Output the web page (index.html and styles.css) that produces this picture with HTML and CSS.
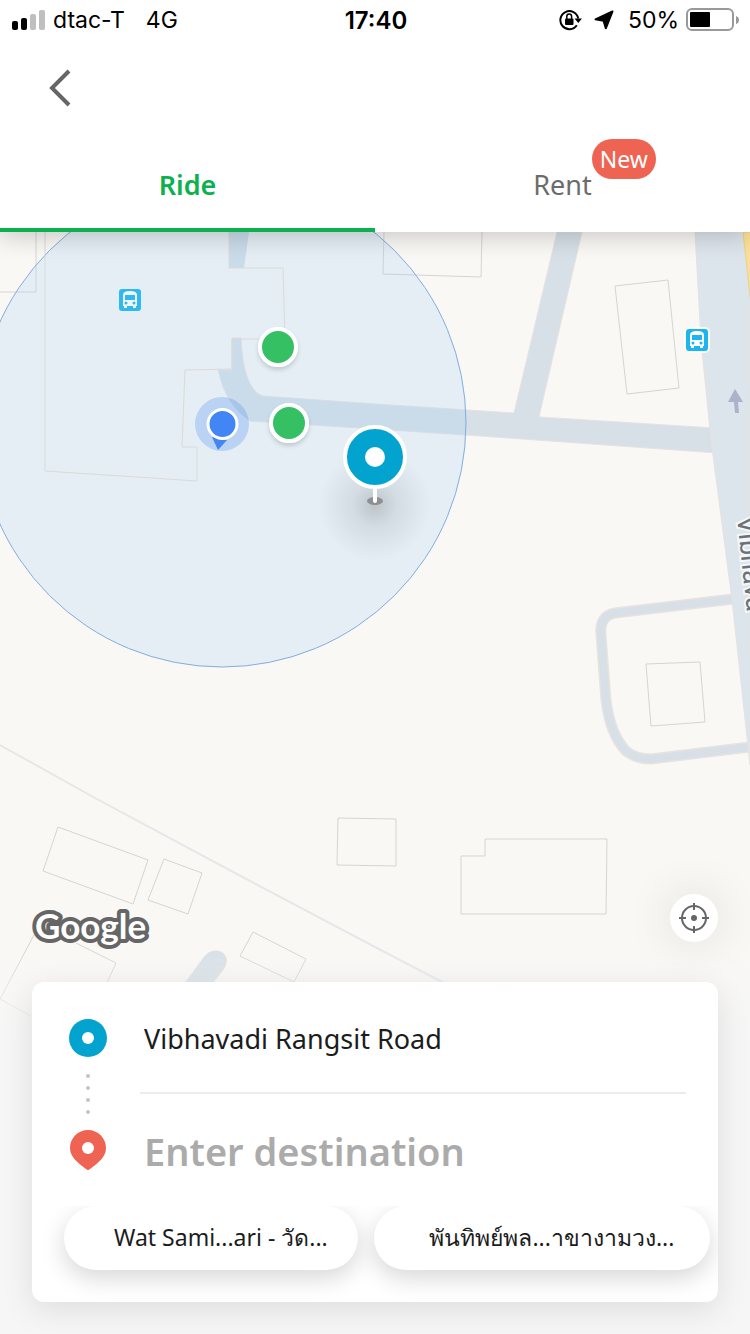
FILE: index.html
```html
<!DOCTYPE html>
<html lang="en">
<head>
  <meta charset="UTF-8">
  <meta name="viewport" content="width=device-width, initial-scale=1">
  <title>Ride</title>
  <link rel="stylesheet" href="styles.css">
</head>
<body>
  <div class="app">
    <header class="header">
      <div class="status">
        <div class="status-left">
          <svg class="signal" width="34" height="20" viewBox="0 0 34 20">
            <rect x="0" y="11" width="6" height="9" rx="2"/>
            <rect x="9" y="8" width="6" height="12" rx="2"/>
            <rect x="18" y="4" width="6" height="16" rx="2" fill="#bfbfbf"/>
            <rect x="27" y="0" width="6" height="20" rx="2" fill="#bfbfbf"/>
          </svg>
          <span>dtac-T</span>
          <span class="network">4G</span>
        </div>
        <div class="clock">17:40</div>
        <div class="status-right">
          <svg width="24" height="22" viewBox="0 0 24 22">
            <path d="M17.800 16.200A9 9 0 1 1 19.200 9.500" fill="none" stroke="#000" stroke-width="2"/>
            <path d="M15.500 9.500h7.500l-3.700 4.500z"/>
            <rect x="6" y="9.500" width="8.500" height="6.500" rx="1"/>
            <path d="M7.800 10V7.500a2.400 2.400 0 0 1 4.800 0V10" fill="none" stroke="#000" stroke-width="1.500"/>
          </svg>
          <svg class="arrow" width="20" height="20" viewBox="0 0 20 20">
            <path d="M18.500 1.500L1.500 9.300L9.500 10.800L11.800 18.300Z" stroke="#000" stroke-width="2" stroke-linejoin="round"/>
          </svg>
          <span>50%</span>
          <svg width="54" height="24" viewBox="0 0 54 24">
            <rect x="1" y="1" width="46" height="21" rx="5" fill="none" stroke="#999" stroke-width="2"/>
            <rect x="4" y="4" width="20" height="15" rx="1"/>
            <path d="M50 8q3 1 3 4t-3 4z" fill="#999"/>
          </svg>
        </div>
      </div>
      <div class="toolbar">
        <button class="back" type="button" aria-label="Back">
          <svg width="24" height="40" viewBox="0 0 24 40">
            <path d="M21 3L4 20l17 17" fill="none" stroke="#666" stroke-width="4"/>
          </svg>
        </button>
      </div>
      <div class="tabs" role="tablist">
        <button class="tab tab-active" type="button" role="tab" aria-selected="true">Ride</button>
        <button class="tab" type="button" role="tab" aria-selected="false">
          <span class="tab-label">Rent<span class="badge">New</span></span>
        </button>
      </div>
    </header>

    <main class="main">
      <svg class="map" viewBox="0 232 750 1102" preserveAspectRatio="xMidYMin slice" aria-hidden="true">
        <defs>
          <radialGradient id="pinShade">
            <stop offset="0" stop-color="#555" stop-opacity=".28"/>
            <stop offset=".4" stop-color="#667" stop-opacity=".13"/>
            <stop offset="1" stop-color="#667" stop-opacity="0"/>
          </radialGradient>
          <linearGradient id="fade" x1="0" y1="0" x2="0" y2="1">
            <stop offset="0" stop-color="#f6f6f6" stop-opacity="0"/>
            <stop offset="1" stop-color="#f6f6f6"/>
          </linearGradient>
          <filter id="drop" x="-30%" y="-30%" width="160%" height="170%">
            <feDropShadow dx="0" dy="3" stdDeviation="2" flood-opacity=".15"/>
          </filter>
          <g id="bus">
            <rect x="-13" y="-13" width="26" height="26" rx="5" fill="#fff" opacity=".8"/>
            <rect x="-11" y="-11" width="22" height="22" rx="3" fill="#1cb5f0"/>
            <path d="M-7-5q0-4 7-4t7 4V6H6v2H3V6h-6v2h-3V6h-1z" fill="#fff"/>
            <rect x="-5" y="-5" width="10" height="5" fill="#1cb5f0"/>
            <circle cx="-4" cy="3" r="1.500" fill="#1cb5f0"/>
            <circle cx="4" cy="3" r="1.500" fill="#1cb5f0"/>
          </g>
          <g id="busDim">
            <rect x="-11" y="-11" width="22" height="22" rx="3" fill="#2fb9ef"/>
            <path d="M-7-5q0-4 7-4t7 4V6H6v2H3V6h-6v2h-3V6h-1z" fill="#eef6fb"/>
            <rect x="-5" y="-5" width="10" height="5" fill="#2fb9ef"/>
            <circle cx="-4" cy="3" r="1.500" fill="#2fb9ef"/>
            <circle cx="4" cy="3" r="1.500" fill="#2fb9ef"/>
          </g>
        </defs>

        <rect y="232" width="750" height="1102" fill="#f9f8f5"/>

        <!-- roads -->
        <g fill="#d6e0e6" stroke="#e6e2e3" stroke-width="1">
          <path d="M229 232h20l-5 36h-15z" stroke="none"/>
          <path d="M733 599L615 613Q599 616 601 635L606 700Q610 734 626 751Q636 759 651 759L750 747" fill="none" stroke="#e8e2e1" stroke-width="11"/>
          <path d="M733 599L615 613Q599 616 601 635L606 700Q610 734 626 751Q636 759 651 759L750 747" fill="none" stroke="#d6e0e6" stroke-width="8"/>
          <path d="M232 338h9Q243 388 262 396L375 404L514 413L557 232h25L539 417L714 428L717 453L466 435L375 429L250 421Q226 406 218 370h14z"/>
          <path d="M180 990L204 957Q213 947 223 953Q230 960 223 970L207 990z"/>
        </g>
        <path d="M0 745L95 798L235 873L375 947L444 983" fill="none" stroke="#e7e6e9" stroke-width="2"/>
        <path d="M695 232L701 340L711 440L732 600L750 765V232z" fill="#dde5ec" stroke="#e6e1e3"/>
        <path d="M743 232L751 305V232z" fill="#fadf98" stroke="#efd083"/>
        <path d="M735 389l8 13h-5l1 11h-4l-1-11h-6z" fill="#adb1c9"/>

        <!-- buildings -->
        <g fill="none" stroke="#d6d5d2">
          <path d="M36 232v60H0"/>
          <path d="M384 232l-1 42 98 3 1-45"/>
          <path d="M615 286l53-6 11 108-52 6z"/>
          <path d="M646 664l54-2 5 60-54 4z"/>
          <path d="M58 827l90 33-15 44-90-33z"/>
          <path d="M164 859l38 14-14 41-40-14z"/>
          <path d="M338 818l58 1v47l-59-1z"/>
          <path d="M485 839h122l-1 75H461v-58h24z"/>
          <path d="M253 932l53 27-12 23-54-26z"/>
          <path d="M34 935L0 999l31 17M76 943l40 20-10 22"/>
        </g>

        <circle cx="222" cy="423" r="244" fill="#a9cff5" fill-opacity=".25" stroke="#82aedf"/>
        <path d="M45 232v239l152 10v-34h-15l3-77 47-1v-30h53l-2-71h-54v-37" fill="none" stroke="#dbdad9"/>

        <use href="#busDim" x="130" y="300"/>
        <use href="#bus" x="697" y="340"/>
        <text class="road-name" transform="translate(737 517) rotate(84)">Vibhava</text>

        <!-- own position and stations nearby -->
        <circle cx="222" cy="424" r="27" fill="#4285f4" fill-opacity=".26"/>
        <path d="M212 437l6 13 9-10z" fill="#4285f4"/>
        <circle cx="222.500" cy="424" r="14.500" fill="#4285f4" stroke="#fff" stroke-width="3"/>
        <g fill="#34c063" stroke="#fff" stroke-width="4" filter="url(#drop)">
          <circle cx="278" cy="347" r="18"/>
          <circle cx="289" cy="423" r="18"/>
        </g>

        <!-- pickup pin -->
        <ellipse cx="375" cy="505" rx="56" ry="56" fill="url(#pinShade)"/>
        <ellipse cx="375" cy="501" rx="8" ry="4" fill="#8d8f91"/>
        <path d="M375 485v16" stroke="#fff" stroke-width="4" stroke-linecap="round"/>
        <circle cx="375" cy="457" r="30" fill="#02a3ce" stroke="#fff" stroke-width="4"/>
        <circle cx="375" cy="457" r="10" fill="#fff"/>

        <rect y="950" width="750" height="90" fill="url(#fade)"/>
        <rect y="1040" width="750" height="294" fill="#f6f6f6"/>
      </svg>

      <div class="map-controls">
        <svg class="google" width="118" height="44" viewBox="0 0 118 44" role="img" aria-label="Google">
          <text x="3" y="33">Google</text>
        </svg>
        <button class="locate" type="button" aria-label="My location">
          <svg width="30" height="30" viewBox="0 0 30 30" fill="none" stroke="#666" stroke-width="2">
            <circle cx="15" cy="15" r="12"/>
            <path d="M15 0v7M15 23v7M0 15h7M23 15h7"/>
            <circle cx="15" cy="15" r="3" fill="#666" stroke="none"/>
          </svg>
        </button>
      </div>

      <section class="card">
        <form class="route">
          <svg class="rail" width="48" height="224" viewBox="0 0 48 224" aria-hidden="true">
            <circle cx="24" cy="56" r="19" fill="#02a3ce"/>
            <circle cx="24" cy="56" r="6" fill="#fff"/>
            <g fill="#c4c4c4">
              <circle cx="24" cy="94" r="2"/>
              <circle cx="24" cy="106" r="2"/>
              <circle cx="24" cy="118" r="2"/>
              <circle cx="24" cy="130" r="2"/>
            </g>
            <path d="M24 148c10 0 18 8 18 18 0 9-8 15-16 21q-2 2-4 0C14 181 6 175 6 166c0-10 8-18 18-18z" fill="#ee6352"/>
            <circle cx="24" cy="166" r="6" fill="#fff"/>
          </svg>
          <div class="fields">
            <input class="field pickup" type="text" aria-label="Pick-up" value="Vibhavadi Rangsit Road">
            <input class="field destination" type="text" aria-label="Destination" placeholder="Enter destination">
          </div>
        </form>
        <div class="chips">
          <button class="chip" type="button">Wat Sami...ari - วัด...</button>
          <button class="chip" type="button">พันทิพย์พล...าขางามวง...</button>
        </div>
      </section>
    </main>
  </div>
</body>
</html>
```

FILE: styles.css
```css
* {
  box-sizing: border-box;
}
body {
  margin: 0;
  background: #f6f6f6;
  color: #1c1c1c;
  font-family: "Noto Sans", "Open Sans", sans-serif;
}
button,
input {
  border: 0;
  background: none;
  color: inherit;
  font: inherit;
}
svg {
  display: block;
}
.app {
  display: flex;
  flex-direction: column;
  min-height: 100vh;
}

/* header */
.header {
  position: relative;
  z-index: 1;
  background: #fff;
  box-shadow: 0 4px 24px rgba(0, 0, 0, 0.2);
}
.status {
  display: grid;
  grid-template-columns: 1fr auto 1fr;
  align-items: center;
  height: 40px;
  padding: 0 10px 0 12px;
  color: #000;
  font-family: Inter, "Liberation Sans", sans-serif;
  font-size: 23px;
}
.status-left,
.status-right {
  display: flex;
  align-items: center;
  gap: 7px;
}
.status-right {
  justify-content: flex-end;
}
.network {
  margin-left: 14px;
}
.arrow {
  margin: 0 7px 0 4px;
}
.clock {
  font-size: 24px;
  font-weight: 600;
}
.toolbar {
  display: flex;
  align-items: center;
  height: 96px;
  padding: 0 32px;
}
.back {
  padding: 16px;
}
.tabs {
  display: flex;
}
.tab {
  flex: 1;
  height: 96px;
  padding: 4px 0 0;
  border-bottom: 4px solid transparent;
  color: #6c6c6c;
  font-size: 27px;
}
.tab-active {
  border-color: #0ab14e;
  color: #0ab14e;
  font-weight: 600;
}
.tab-label {
  position: relative;
}
.badge {
  position: absolute;
  left: 100%;
  bottom: 24px;
  height: 40px;
  padding: 0 8px;
  border-radius: 20px;
  background: #ee6352;
  color: #fff;
  font-size: 23px;
  line-height: 40px;
}

/* map */
.main {
  position: relative;
  display: flex;
  flex: 1;
  flex-direction: column;
  justify-content: flex-end;
  padding: 32px;
}
.map {
  position: absolute;
  top: 0;
  left: 0;
  width: 100%;
  height: 100%;
}
.road-name {
  fill: #6d7177;
  stroke: #f4f7fa;
  stroke-width: 4px;
  paint-order: stroke;
  font-family: Roboto, sans-serif;
  font-size: 27px;
}
.map-controls {
  position: relative;
  display: flex;
  align-items: flex-start;
  justify-content: space-between;
  margin-bottom: 32px;
}
.google {
  align-self: flex-end;
  margin-top: 12px;
  overflow: visible;
  fill: #fff;
  stroke: #666;
  stroke-width: 8px;
  stroke-linejoin: round;
  paint-order: stroke;
  font-family: Lato, sans-serif;
  font-size: 35px;
  font-weight: 700;
}
.locate {
  display: flex;
  align-items: center;
  justify-content: center;
  width: 48px;
  height: 48px;
  padding: 0;
  border-radius: 50%;
  background: #fff;
  box-shadow: 0 0 48px rgba(0, 0, 0, 0.12);
}

/* route card */
.card {
  position: relative;
  overflow: hidden;
  border-radius: 12px;
  background: #fff;
  box-shadow: 0 8px 32px rgba(0, 0, 0, 0.1);
}
.route {
  display: flex;
  gap: 28px;
  padding: 0 32px;
}
.rail {
  flex: none;
}
.fields {
  display: flex;
  flex: 1;
  flex-direction: column;
  min-width: 0;
}
.field {
  width: 100%;
  height: 112px;
  padding: 2px 4px 0;
  outline: none;
}
.pickup {
  border-bottom: 2px solid #ececec;
  font-size: 27px;
}
.destination {
  font-size: 38px;
  font-weight: 600;
}
.destination::placeholder {
  color: #ababab;
}
.chips {
  display: flex;
  gap: 16px;
  overflow-x: auto;
  padding: 0 8px 32px 32px;
  scrollbar-width: none;
}
.chip {
  flex: none;
  height: 64px;
  padding: 0 30px 0 50px;
  border-radius: 32px;
  background: #fff;
  box-shadow: 0 8px 24px rgba(0, 0, 0, 0.16);
  font-size: 23px;
  white-space: nowrap;
}
.chip:last-child {
  flex: 1 0 auto;
}
```
